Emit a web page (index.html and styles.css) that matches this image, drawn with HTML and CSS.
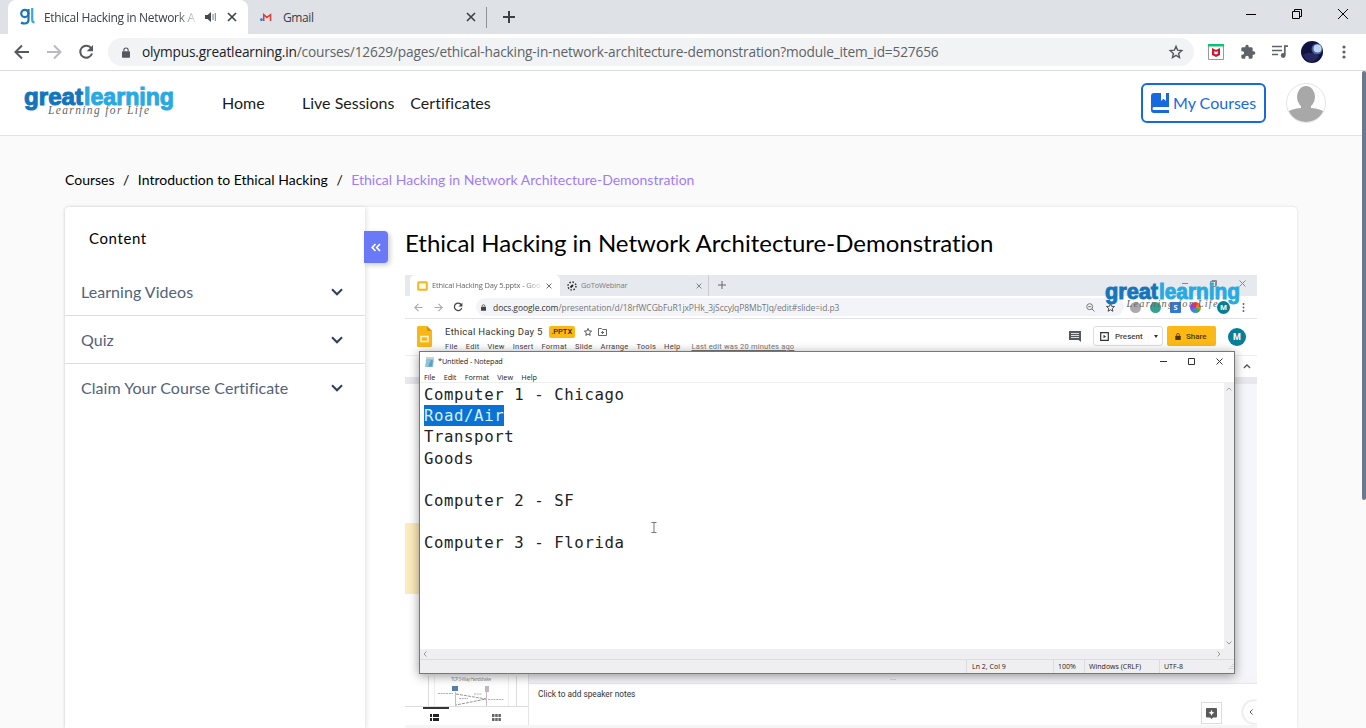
FILE: index.html
```html
<!DOCTYPE html>
<html lang="en">
<head>
<meta charset="utf-8">
<title>Ethical Hacking in Network Architecture-Demonstration</title>
<link rel="stylesheet" href="styles.css">
</head>
<body>
<svg class="defs" width="0" height="0">
  <symbol id="brand" viewBox="0 0 152 34">
    <g class="brand-word"><text x="1" y="18.500" textLength="59" lengthAdjust="spacingAndGlyphs" fill="#1475bc" stroke="#1475bc">great</text>
    <text x="61" y="18.500" textLength="90" lengthAdjust="spacingAndGlyphs" fill="#29a9e1" stroke="#29a9e1">learning</text></g>
    <text class="brand-tag" x="25" y="28" textLength="101">Learning for Life</text>
  </symbol>
  <symbol id="x" viewBox="0 0 10 10"><path d="M1 1l8 8M9 1L1 9" fill="none" stroke="currentColor" stroke-width="1.6"/></symbol>
  <symbol id="back" viewBox="0 0 16 16"><path d="M15 8H2M8 1.500L1.500 8 8 14.500" fill="none" stroke="currentColor" stroke-width="2"/></symbol>
  <symbol id="reload" viewBox="0 0 16 16"><path d="M13.200 4.300A6 6 0 1 0 14 9.500" fill="none" stroke="currentColor" stroke-width="2"/><path d="M15 1v6.300H8.700z" fill="currentColor"/></symbol>
  <symbol id="lock" viewBox="0 0 10 13"><path d="M1 5h8q1 0 1 1v6q0 1-1 1H1q-1 0-1-1V6q0-1 1-1z" fill="currentColor"/><path d="M2.300 5V3.500a2.700 2.700 0 0 1 5.400 0V5" fill="none" stroke="currentColor" stroke-width="1.400"/></symbol>
  <symbol id="star" viewBox="0 0 16 16"><path d="M8 2.300l1.600 3.900 4.200.4-3.200 2.800.9 4.100L8 11.300l-3.500 2.200.9-4.100-3.200-2.800 4.200-.4z" fill="none" stroke="currentColor" stroke-width="1.400"/></symbol>
  <symbol id="chev" viewBox="0 0 12 8"><path d="M1 1.300l5 5 5-5" fill="none" stroke="currentColor" stroke-width="2"/></symbol>
</svg>

<div class="tabs">
  <div class="tab tab-on">
    <svg class="fav" width="16" height="18" viewBox="0 0 16 18" fill="none" stroke-width="2.200"><g stroke="#1778b5"><circle cx="4.800" cy="5.500" r="3.600"/><path d="M8.500 1v10.500q0 4-4 4-2 0-3.500-1"/></g><path d="M12.200 0v12q0 2.300 2.300 2.300" stroke="#35a9dc"/></svg>
    <span class="tab-title">Ethical Hacking in Network A</span>
    <svg class="snd" width="12" height="10" viewBox="0 0 12 10"><path d="M0 3h2.500L6 0v10L2.500 7H0z" fill="#45484c"/><path d="M8 2v6M10.300 1v8" stroke="#777a7e"/></svg>
    <svg class="tab-x" width="10" height="10"><use href="#x"/></svg>
  </div>
  <div class="tab tab-off">
    <svg width="12" height="10" viewBox="0 0 13 11"><path d="M4 10V3l3.500 3L11.500 3v7" fill="none" stroke="#d93f34" stroke-width="1.700"/><circle cx="1.500" cy="8.500" r="1.500" fill="#2377e8"/></svg>
    <span class="gmail">Gmail</span>
    <svg class="tab-x" width="10" height="10"><use href="#x"/></svg>
  </div>
  <svg class="plus" width="12" height="12" viewBox="0 0 12 12"><path d="M6 0v12M0 6h12" stroke="#3c4043" stroke-width="2"/></svg>
  <div class="win">
    <svg width="10" height="10"><path d="M0 5.500h10" stroke="#000"/></svg>
    <svg width="10" height="10" viewBox="0 0 10 10" fill="none" stroke="#000"><path d="M.5 2.500h7v7h-7zM2.500 2.500v-2h7v7h-2"/></svg>
    <svg width="10" height="10" viewBox="0 0 10 10"><path d="M0 0l10 10M10 0L0 10" stroke="#000"/></svg>
  </div>
</div>

<div class="toolbar">
  <svg class="t-back" width="16" height="16"><use href="#back"/></svg>
  <svg class="t-fwd" width="16" height="16"><use href="#back"/></svg>
  <svg class="t-reload" width="16" height="16"><use href="#reload"/></svg>
  <div class="omni">
    <svg width="8" height="11"><use href="#lock"/></svg>
    <span class="url"><b>olympus.greatlearning.in</b>/courses/12629/pages/ethical-hacking-in-network-architecture-demonstration?module_item_id=527656</span>
    <svg class="omni-star" width="16" height="16"><use href="#star"/></svg>
  </div>
  <div class="exts">
    <svg width="16" height="16" viewBox="0 0 16 16"><path d="M.5.5h15v15H.5z" fill="#fff" stroke="#999"/><path d="M0 0h16v2.500H0z" fill="#0cc278"/><path d="M4 4l4 2 4-2v7l-4 2-4-2z" fill="#c8192e"/><path d="M6.300 7v2.700L8 10.500l1.700-.8V7L8 8z" fill="#fff"/></svg>
    <svg width="16" height="16" viewBox="0 0 24 24"><path fill="#5f6368" d="M20.500 11H19V7a2 2 0 0 0-2-2h-4V3.500a2.500 2.500 0 0 0-5 0V5H4a2 2 0 0 0-2 2v3.800h1.500a2.700 2.700 0 0 1 0 5.400H2V20c0 1.100.9 2 2 2h3.800v-1.500a2.700 2.700 0 0 1 5.400 0V22H17a2 2 0 0 0 2-2v-4h1.500a2.500 2.500 0 0 0 0-5z"/></svg>
    <svg width="16" height="14" viewBox="0 0 16 14"><path d="M0 1.500h10M0 5.500h10M0 9.500h6" stroke="#5f6368" stroke-width="1.600"/><path d="M16 1.200h-3.200V10" fill="none" stroke="#5f6368" stroke-width="1.700"/><circle cx="11.200" cy="10.500" r="2.400" fill="#5f6368"/></svg>
    <svg class="moon" width="22" height="22" viewBox="0 0 22 22"><circle cx="11" cy="11" r="11" fill="#10123f"/><path d="M2 14q6-5 16 1-4 6-9 6-5-2-7-7z" fill="#25285e"/><circle cx="16" cy="8" r="5.500" fill="#495f9e"/><circle cx="16.500" cy="7.500" r="4" fill="#bed4f4"/></svg>
    <svg class="dots" width="4" height="14" viewBox="0 0 4 14" fill="#5f6368"><circle cx="2" cy="2" r="1.600"/><circle cx="2" cy="7" r="1.600"/><circle cx="2" cy="12" r="1.600"/></svg>
  </div>
</div>

<div class="page">
  <header class="head">
    <svg class="logo" width="152" height="34"><use href="#brand"/></svg>
    <nav class="nav"><span class="home">Home</span><span>Live Sessions</span><span>Certificates</span></nav>
    <div class="my"><svg width="18" height="20" viewBox="0 0 18 20"><path d="M3 0h7v8l2.500-2.300L15 8V0h3v14H3q-1.500 0-1.500 1.500T3 17h15v3H3q-3 0-3-3V3q0-3 3-3z" fill="#1769e0"/></svg><span>My Courses</span></div>
    <svg class="avatar" width="40" height="40" viewBox="0 0 40 40"><defs><clipPath id="av"><circle cx="20" cy="20" r="19"/></clipPath></defs><circle cx="20" cy="20" r="19.500" fill="#fff" stroke="#e4e4e4"/><g clip-path="url(#av)" fill="#a8a8a8"><ellipse cx="20" cy="14" rx="9" ry="11"/><path d="M15 20h10v5q11 1 15 5v10H0V30q4-4 15-5z"/></g></svg>
  </header>
  <div class="crumbs"><span>Courses</span><i>/</i><span>Introduction to Ethical Hacking</span><i>/</i><span class="here">Ethical Hacking in Network Architecture-Demonstration</span></div>
  <div class="card">
    <aside class="side">
      <h2>Content</h2>
      <div class="item"><span>Learning Videos</span><svg width="12" height="8"><use href="#chev"/></svg></div>
      <div class="item"><span>Quiz</span><svg width="12" height="8"><use href="#chev"/></svg></div>
      <div class="item last"><span>Claim Your Course Certificate</span><svg width="12" height="8"><use href="#chev"/></svg></div>
      <div class="fold"><svg width="10" height="9" viewBox="0 0 10 9"><path d="M4.500 1L1.200 4.500l3.300 3.500M9 1L5.700 4.500 9 8" fill="none" stroke="#fff" stroke-width="1.700"/></svg></div>
    </aside>
    <main class="main">
      <h1>Ethical Hacking in Network Architecture-Demonstration</h1>
      <div class="video">
        <div class="v-tabs">
          <div class="v-tab v-on"><svg width="11" height="10" viewBox="0 0 11 10"><rect x="1.200" y="1.200" width="8.600" height="7.600" rx=".5" fill="#fffbe8" stroke="#f5b722" stroke-width="2"/></svg><span class="vt1">Ethical Hacking Day 5.pptx - Goo</span><svg width="6" height="6"><use href="#x"/></svg></div>
          <div class="v-tab v-off"><svg width="10" height="10" viewBox="0 0 10 10"><circle cx="5" cy="5" r="4" fill="none" stroke="#333" stroke-width="1.500" stroke-dasharray="1.500 1.640"/><path d="M3.500 6.500L6 4" stroke="#222" stroke-width="1.800"/></svg><span class="vt2">GoToWebinar</span><svg width="6" height="6"><use href="#x"/></svg></div>
          <svg class="v-plus" width="8" height="8" viewBox="0 0 8 8"><path d="M4 0v8M0 4h8" stroke="#666"/></svg>
          <div class="v-win"><svg width="6" height="7"><path d="M0 3.500h6" stroke="#888"/></svg><svg width="7" height="7" viewBox="0 0 7 7"><path d="M.5 1.500h5v5h-5zM2 1.500v-1h4.500v5h-1" fill="none" stroke="#888"/></svg><svg width="7" height="7" viewBox="0 0 7 7"><path d="M.5.5l6 6M6.500.5l-6 6" stroke="#888"/></svg></div>
        </div>
        <div class="v-bar">
          <svg class="vb" width="9" height="9"><use href="#back"/></svg><svg class="vb flip" width="9" height="9"><use href="#back"/></svg><svg class="vr" width="10" height="10"><use href="#reload"/></svg>
          <div class="v-omni"><svg width="5" height="7"><use href="#lock"/></svg><span class="v-url"><b>docs.google.com</b>/presentation/d/18rfWCGbFuR1jxPHk_3jSccyJqP8MbTJq/edit#slide=id.p3</span>
            <svg class="mag" width="9" height="9" viewBox="0 0 9 9"><circle cx="3.700" cy="3.700" r="3" fill="none" stroke="#777"/><path d="M6 6l2.500 2.500M2.200 3.700h3" stroke="#777"/></svg><svg width="11" height="11"><use href="#star"/></svg></div>
          <div class="v-exts"><i class="e1"></i><i class="e2"></i><i class="e3">S</i><i class="e4"></i><i class="e5">M</i><svg width="3" height="9" viewBox="0 0 3 9" fill="#666"><circle cx="1.500" cy="1" r="1"/><circle cx="1.500" cy="4.500" r="1"/><circle cx="1.500" cy="8" r="1"/></svg></div>
        </div>
        <div class="doc">
          <svg class="slides" width="15" height="21" viewBox="0 0 15 21"><path d="M1.500 0H10l5 5v14.500q0 1.500-1.500 1.500h-12Q0 21 0 19.500v-18Q0 0 1.500 0z" fill="#f8b619"/><path d="M10 0l5 5h-5z" fill="#d99500"/><path d="M4 10.500h7v5H4z" fill="none" stroke="#fff5cf" stroke-width="1.500"/></svg>
          <div class="doc-mid">
            <div class="doc-top"><span class="doc-name">Ethical Hacking Day 5</span><span class="pptx">.PPTX</span><svg width="10" height="10"><use href="#star"/></svg><svg width="9" height="8" viewBox="0 0 9 8"><path d="M.5 7.500v-7h3l1 1h4v6zM3 4.500h3M4.500 3v3" fill="none" stroke="#666"/></svg></div>
            <div class="doc-menu"><span>File</span><span>Edit</span><span>View</span><span>Insert</span><span>Format</span><span>Slide</span><span>Arrange</span><span>Tools</span><span>Help</span><u>Last edit was 20 minutes ago</u></div>
          </div>
          <svg class="cmt" width="12" height="11" viewBox="0 0 12 11"><path d="M0 0h12v11l-2.500-2H0z" fill="#55585d"/><path d="M2 2.500h8M2 4.500h8M2 6.500h8" stroke="#fff" stroke-width=".8"/></svg>
          <div class="present"><svg width="9" height="9" viewBox="0 0 9 9"><path d="M.7.7h7.600v7.600H.7z" fill="none" stroke="#333" stroke-width="1.200"/><path d="M3.500 2.700l2.500 1.800-2.500 1.800z" fill="#333"/></svg><span>Present</span><em></em></div>
          <div class="share"><svg width="6" height="7"><use href="#lock"/></svg><span>Share</span></div>
          <div class="who">M</div>
        </div>
        <div class="ribbon"><svg width="8" height="5" viewBox="0 0 12 8"><path d="M1 6.500l5-5 5 5" fill="none" stroke="#555" stroke-width="2"/></svg></div>
        <div class="stage"><div class="mark"></div></div>
        <div class="bottom">
          <div class="film">
            <svg class="thumb" width="123" height="30" viewBox="0 0 123 30"><path d="M23.500 0v30M111.500 0v30" stroke="#ddd"/><path d="M29.500 0v30M103.500 0v30" stroke="#eee"/><text x="46" y="4.500" font-size="4.600" textLength="40" fill="#888">TCP 3-Way Handshake</text><path d="M47 10h6v5h-6z" fill="#547fae"/><path d="M80 10h4v6h-4z" fill="#bbb"/><path d="M50.500 16v14M81.500 16v14" stroke="#c8b5ce"/><path d="M51 18l30 5-30 6" fill="none" stroke="#666" stroke-width=".7" stroke-dasharray="3 1"/><path d="M33 17.500h15M83 23.500h16M54 22.500h9M69 18h8" stroke="#c6a7a7" stroke-dasharray="2 .7"/></svg>
            <div class="views"><svg width="9" height="7" viewBox="0 0 9 7"><path d="M0 0h2v3H0zM3 0h6v3H3zM0 4h2v3H0zM3 4h6v3H3z" fill="#222"/></svg><svg width="9" height="7" viewBox="0 0 9 7"><path d="M0 0h2.500v3H0zM3.200 0h2.500v3H3.200zM6.400 0h2.500v3H6.400zM0 4h2.500v3H0zM3.200 4h2.500v3H3.200zM6.400 4h2.500v3H6.400z" fill="#666"/></svg></div>
          </div>
          <div class="notes"><div class="grip"><span>...</span></div><div class="note-body"><span>Click to add speaker notes</span>
            <div class="explore"><svg width="11" height="11" viewBox="0 0 11 11"><path d="M1 0h9q1 0 1 1v7.500q0 1-1 1H7L5.500 11 4 9.500H1q-1 0-1-1V1q0-1 1-1z" fill="#5a5a5a"/><path d="M5.500 1.800l.9 2.100 2.100.9-2.100.9-.9 2.100-.9-2.100-2.100-.9 2.100-.9z" fill="#fff"/></svg></div><div class="tuck"><svg width="4" height="6" viewBox="0 0 4 6"><path d="M3.500.5L1 3l2.500 2.500" fill="none" stroke="#555"/></svg></div></div></div>
        </div>
        <div class="pad">
          <div class="pad-title"><svg width="9" height="10" viewBox="0 0 9 10"><path d="M1.500 0H9L8 10H0z" fill="#8cc3dd"/><path d="M1.500 0H9v2H1.200z" fill="#c2d5dd"/><path d="M6 3l2 .5-1 6H3z" fill="#5d9fbe"/></svg><span>*Untitled - Notepad</span><div class="pad-win"><svg width="7" height="7"><path d="M0 3.500h7" stroke="#333"/></svg><svg width="7" height="7"><path d="M.5.5h6v6h-6z" fill="none" stroke="#333"/></svg><svg width="7" height="7"><path d="M.5.5l6 6M6.500.5l-6 6" stroke="#333"/></svg></div></div>
          <div class="pad-menu"><span>File</span><span>Edit</span><span>Format</span><span>View</span><span>Help</span></div>
          <div class="pad-body">
            <div class="pad-text"><p>Computer 1 - Chicago</p><p><mark>Road/Air</mark></p><p>Transport</p><p>Goods</p><p></p><p>Computer 2 - SF</p><p></p><p>Computer 3 - Florida</p></div>
            <div class="vscroll"><svg width="6" height="4"><path d="M.5 3.500L3 1l2.500 2.500" fill="none" stroke="#aaa"/></svg><svg width="6" height="4"><path d="M.5.5L3 3 5.500.5" fill="none" stroke="#999"/></svg></div>
          </div>
          <div class="hscroll"><svg width="4" height="6"><path d="M3.500.5L1 3l2.500 2.500" fill="none" stroke="#999"/></svg><svg width="4" height="6"><path d="M.5.5L3 3 .5 5.500" fill="none" stroke="#999"/></svg></div>
          <div class="status"><span class="s1">Ln 2, Col 9</span><span class="s2">100%</span><span class="s3">Windows (CRLF)</span><span class="s4">UTF-8</span><svg width="6" height="6"><path d="M5 0v6M3 2v4M1 4v2" stroke="#bbb" stroke-dasharray="1 1"/></svg></div>
          <svg class="caret" width="6" height="11" viewBox="0 0 6 11"><path d="M.5.5h5M3 .5v10M.5 10.500h5" stroke="#777"/></svg>
        </div>
        <svg class="wmark" width="137" height="31"><use href="#brand"/></svg>
      </div>
    </main>
  </div>
  <div class="scroll"></div>
</div>
</body>
</html>
```

FILE: styles.css
```css
* { box-sizing: border-box; }
body { margin: 0; width: 1366px; height: 728px; overflow: hidden; display: flex; flex-direction: column; background: #fff; font-family: Lato, sans-serif; font-variant-ligatures: none; }
svg { display: block; flex: none; }
span, b { white-space: nowrap; font-weight: 400; }
i { font-style: normal; }
.defs { position: absolute; }
.brand-word { font: 700 23.500px "Liberation Sans", sans-serif; stroke-width: 1; }
.brand-tag { font: italic 11.500px "Liberation Serif", serif; fill: #666; }

/* Browser chrome */
.tabs { height: 34px; flex: none; display: flex; background: #dee1e6; font: 12px "Open Sans", sans-serif; color: #3c4043; }
.tab { display: flex; align-items: center; height: 34px; }
.tab-on { width: 240px; margin-left: 8px; padding-left: 12px; background: #fff; border-radius: 8px 8px 0 0; color: #3c4043; }
.tab-title { width: 152px; margin-left: 8px; overflow: hidden; letter-spacing: -.31px; -webkit-mask-image: linear-gradient(90deg, #000 132px, transparent 155px); }
.snd { margin-left: 9px; }
.tab-on .tab-x { margin-left: 10px; }
.tab-off { width: 239px; padding-left: 12px; border-image: linear-gradient(#dee1e6 8px, #8f9296 8px, #8f9296 27px, #dee1e6 27px) 1; border-right: 1px solid; }
.gmail { margin-left: 11px; letter-spacing: -.4px; flex: 1; }
.tab-off .tab-x { margin-right: 10px; }
.plus { margin: 11px 0 0 16px; }
.win { margin-left: auto; display: flex; gap: 36px; padding: 9px 18px 0 0; }
.toolbar { height: 37px; flex: none; display: flex; align-items: center; padding: 0 18px 0 14px; border-bottom: 1px solid #d9dbdd; color: #55585d; }
.t-fwd { margin-left: 16px; transform: scaleX(-1); color: #b8babd; }
.t-reload { margin-left: 16px; }
.omni { width: 1086px; height: 28px; margin-left: 14px; padding: 0 10px 0 14px; display: flex; align-items: center; border-radius: 14px; background: #f1f3f4; }
.url { margin: -1px 0 0 12px; font: 13.700px "Open Sans", sans-serif; letter-spacing: -.17px; color: #5f6368; }
.url b { color: #202124; }
.omni-star { margin-left: auto; }
.exts { flex: 1; display: flex; align-items: center; gap: 16px; padding-left: 14px; }
.moon { margin-left: -3px; }
.dots { margin-left: 3px; }

/* Course page */
.page { flex: 1; min-height: 0; position: relative; background: #fafafb; display: flex; flex-direction: column; }
.head { height: 65px; flex: none; background: #fff; border-bottom: 1px solid #e3e3e5; display: flex; align-items: center; padding: 0 40px 0 23px; }
.logo { margin-top: -1px; }
.nav { display: flex; gap: 16px; margin: -2px 0 0 47px; font-size: 16px; color: #1c1c1c; letter-spacing: 0; }
.home { width: 64px; }
.my { margin-left: auto; width: 125px; height: 40px; border: 2px solid #1769e0; border-radius: 6px; display: flex; align-items: center; gap: 4px; padding-left: 8px; color: #1769e0; font-size: 16px; }
.my span { margin-top: -2px; }
.avatar { margin-left: 20px; }
.crumbs { margin: 34px 0 0 65px; height: 20px; flex: none; display: flex; gap: 8.500px; font-size: 14px; line-height: 20px; color: #000; }
.here { color: #a07cfa; }
.card { flex: 1; margin: 17px 69px 0 65px; background: #fff; display: flex; border-radius: 4px 4px 0 0; box-shadow: 0 0 3px #0002; }
.side { position: relative; width: 300px; flex: none; border-radius: 4px 0 0; box-shadow: 1px 1px 5px #0002; }
.side h2 { margin: 0; padding: 21px 0 0 24px; height: 61px; font-size: 15px; line-height: 20px; font-weight: 400; letter-spacing: .6px; }
.item { height: 48px; display: flex; align-items: center; justify-content: space-between; padding: 0 22px 0 16px; border-bottom: 1px solid #dedee0; color: #53627b; font-size: 16px; letter-spacing: .05px; }
.last { border: 0; padding-bottom: 1px; }
.item svg { color: #2e3e5c; }
.fold { position: absolute; left: 299px; top: 24px; width: 24px; height: 32px; border-radius: 0 4px 4px 0; background: #6979f8; box-shadow: 2px 2px 5px #0003; display: grid; place-items: center; }
.main { padding: 20px 40px 0; }
.main h1 { margin: 0; height: 48px; font-size: 24px; line-height: 32px; font-weight: 400; color: #000; }
.scroll { position: absolute; right: 0; top: 0; width: 4px; height: 429px; background: #6b7890; border-radius: 2px; }

/* Video frame */
.video { position: relative; width: 852px; height: 453px; overflow: hidden; background: #fff; font-family: "Open Sans", sans-serif; font-size: 7.500px; color: #444; display: flex; flex-direction: column; }
.v-tabs { height: 21px; flex: none; display: flex; background: #e6e9ed; color: #7c7c80; }
.v-tab { display: flex; align-items: center; }
.v-on { margin-left: 5px; width: 150px; padding: 0 8px 0 7px; background: #fff; border-radius: 5px 5px 0 0; color: #666; }
.vt1 { width: 110px; margin: -1px 6px 0 4px; overflow: hidden; letter-spacing: -.14px; -webkit-mask-image: linear-gradient(90deg, #000 92px, transparent 112px); }
.v-off { width: 149px; padding: 0 6px 0 7px; border-right: 1px solid #ccc; }
.vt2 { margin: -1px 0 0 4px; flex: 1; letter-spacing: -.15px; }
.v-plus { margin: 6px 0 0 9px; }
.v-win { margin-left: auto; display: flex; gap: 22px; padding: 5px 11px 0 0; }
.v-bar { height: 23px; flex: none; display: flex; align-items: center; padding: 0 12px 0 9px; border-bottom: 1px solid #e4e4e8; }
.vb { color: #aaa; }
.flip { margin-left: 11px; transform: scaleX(-1); }
.vr { margin-left: 10px; color: #444; }
.v-omni { margin-left: 13px; width: 648px; height: 18px; border-radius: 9px; background: #f3f4f7; display: flex; align-items: center; padding: 0 8px 0 9px; }
.v-omni > svg:first-child { margin-left: -4px; }
.v-url { margin-left: 7px; font-size: 8.500px; letter-spacing: -.06px; color: #777; }
.v-url b { color: #333; }
.mag { margin: 0 10px 0 auto; }
.v-exts { margin-left: auto; display: flex; align-items: center; gap: 9px; }
.v-exts i { width: 11px; height: 11px; border-radius: 50%; text-align: center; line-height: 11px; color: #fff; font-weight: 700; }
.e1 { background: #aaa; }
.e2 { background: #34a090; }
.v-exts .e3 { background: #3378d4; border-radius: 1px; }
.e4 { background: conic-gradient(#e33, #f80, #3a5, #38f, #a3c, #e33); }
.v-exts .e5 { width: 13px; height: 13px; line-height: 13px; background: #087f91; margin: 0 3px 0 7px; }
.doc { height: 36px; flex: none; display: flex; padding-left: 12px; font-family: Roboto, sans-serif; }
.slides { margin-top: 7px; }
.doc-mid { margin-left: 13px; width: 598px; }
.doc-top { height: 20px; padding-top: 5px; display: flex; align-items: center; }
.doc-top svg { margin-left: 8px; }
.doc-top svg:last-child { margin-left: 5px; }
.doc-name { font-size: 9.500px; letter-spacing: .3px; color: #333; }
.pptx { margin-left: 6px; width: 26px; height: 12px; border-radius: 2px; background: #fbb914; text-align: center; font-size: 7.500px; line-height: 12px; color: #332600; font-weight: 500; }
.doc-menu { display: flex; gap: 8px; line-height: 15px; font-size: 7.500px; letter-spacing: .25px; color: #444; }
.doc-menu u { margin-left: 3px; color: #777; letter-spacing: .18px; }
.cmt { margin: 12px 0 0 26px; overflow: visible; }
.present { width: 70px; height: 20px; margin: 7px 0 0 12px; border: 1px solid #ddd; border-radius: 3px; display: flex; align-items: center; gap: 6px; padding-left: 6px; font-size: 8px; }
.present span, .share span { font-weight: 500; }
.present em { margin-left: 5px; border: 2px solid transparent; border-top: 3px solid #333; border-bottom: 0; }
.share { width: 49px; height: 20px; margin: 7px 0 0 4px; background: #fcb814; border-radius: 2px; display: flex; align-items: center; gap: 5px; padding-left: 8px; font-size: 8px; color: #4c3600; }
.who { width: 18px; height: 18px; margin: 9px 0 0 12px; border-radius: 50%; background: #087f98; color: #fff; font-weight: 700; font-size: 9px; line-height: 18px; text-align: center; }
.ribbon { height: 22px; flex: none; border-top: 1px solid #eee; display: flex; justify-content: flex-end; padding: 8px 6px 0 0; }
.stage { flex: 1; border-top: 7px solid #e7e7ed; background: linear-gradient(90deg, #fff 124px, #f5f6fb 0); }
.mark { margin-top: 139px; width: 16px; height: 71px; background: #fdebbd; }
.bottom { height: 54px; flex: none; display: flex; border-bottom: 3px solid #f5f5f7; }
.film { width: 124px; border-right: 1px solid #e4e4e8; }
.thumb { margin-top: 2px; }
.views { height: 19px; display: flex; gap: 53px; padding: 7px 0 0 25px; border-top: 1px solid #ddd; background: linear-gradient(#333, #333) 18px 0 / 26px 2px no-repeat; }
.notes { flex: 1; }
.grip { height: 10px; background: #f5f5f9; border-bottom: 1px solid #e6e6ec; text-align: center; line-height: 6px; color: #aaa; }
.note-body { height: 41px; display: flex; padding-left: 9px; font: 8.300px/22px Roboto, sans-serif; color: #333; }
.explore { width: 21px; height: 22px; margin: 18px 0 0 auto; border: 1px solid #ddd; display: grid; place-items: center; }
.tuck { width: 14px; height: 22px; margin: 17px 0 0 21px; border-radius: 11px 0 0 11px; box-shadow: 0 0 3px #0004; padding: 8px 0 0 6px; }
.note-body > span { margin-top: -1px; }

/* Notepad window */
.pad { position: absolute; left: 14px; top: 76px; width: 816px; height: 323px; border: 1px solid #777; background: #fff; box-shadow: 0 2px 10px #0006; display: flex; flex-direction: column; color: #222; }
.pad-title { height: 19px; flex: none; display: flex; align-items: center; padding: 0 11px 0 5px; }
.pad-title span { margin: -2px 0 0 4px; letter-spacing: -.12px; font-size: 7.300px; }
.pad-win { margin: -1px 0 0 auto; display: flex; gap: 21px; }
.pad-menu { height: 12px; flex: none; display: flex; gap: 8.300px; padding-left: 4px; font-size: 7.300px; line-height: 12px; letter-spacing: -.05px; border-bottom: 1px solid #eee; }
.pad-body { flex: 1; display: flex; }
.pad-text { flex: 1; padding: 1px 0 0 4px; font: 15.700px/21.200px "DejaVu Sans Mono", monospace; letter-spacing: .58px; color: #222; }
.pad-text p { margin: 0; height: 21.200px; }
.pad-text mark { display: inline-block; height: 21px; line-height: 21px; background: #0873d5; color: #dcefff; }
.vscroll { width: 10px; background: #f0f0f2; display: flex; flex-direction: column; justify-content: space-between; padding: 4px 2px; }
.hscroll { height: 10px; flex: none; background: #efeef1; display: flex; justify-content: space-between; align-items: center; padding: 0 13px 0 3px; }
.status { height: 14px; flex: none; background: #efeef1; border-top: 1px solid #dcdcde; display: flex; align-items: center; justify-content: flex-end; font-size: 7px; line-height: 14px; letter-spacing: .02px; }
.status span { border-left: 1px solid #dcdcde; height: 13px; padding-left: 4px; }
.status .s1 { width: 87px; padding-left: 5px; }
.s2 { width: 31px; }
.s3 { width: 75px; }
.s4 { width: 69px; }
.caret { position: absolute; left: 231px; top: 170px; }
.wmark { position: absolute; left: 699px; top: 7px; }
```
